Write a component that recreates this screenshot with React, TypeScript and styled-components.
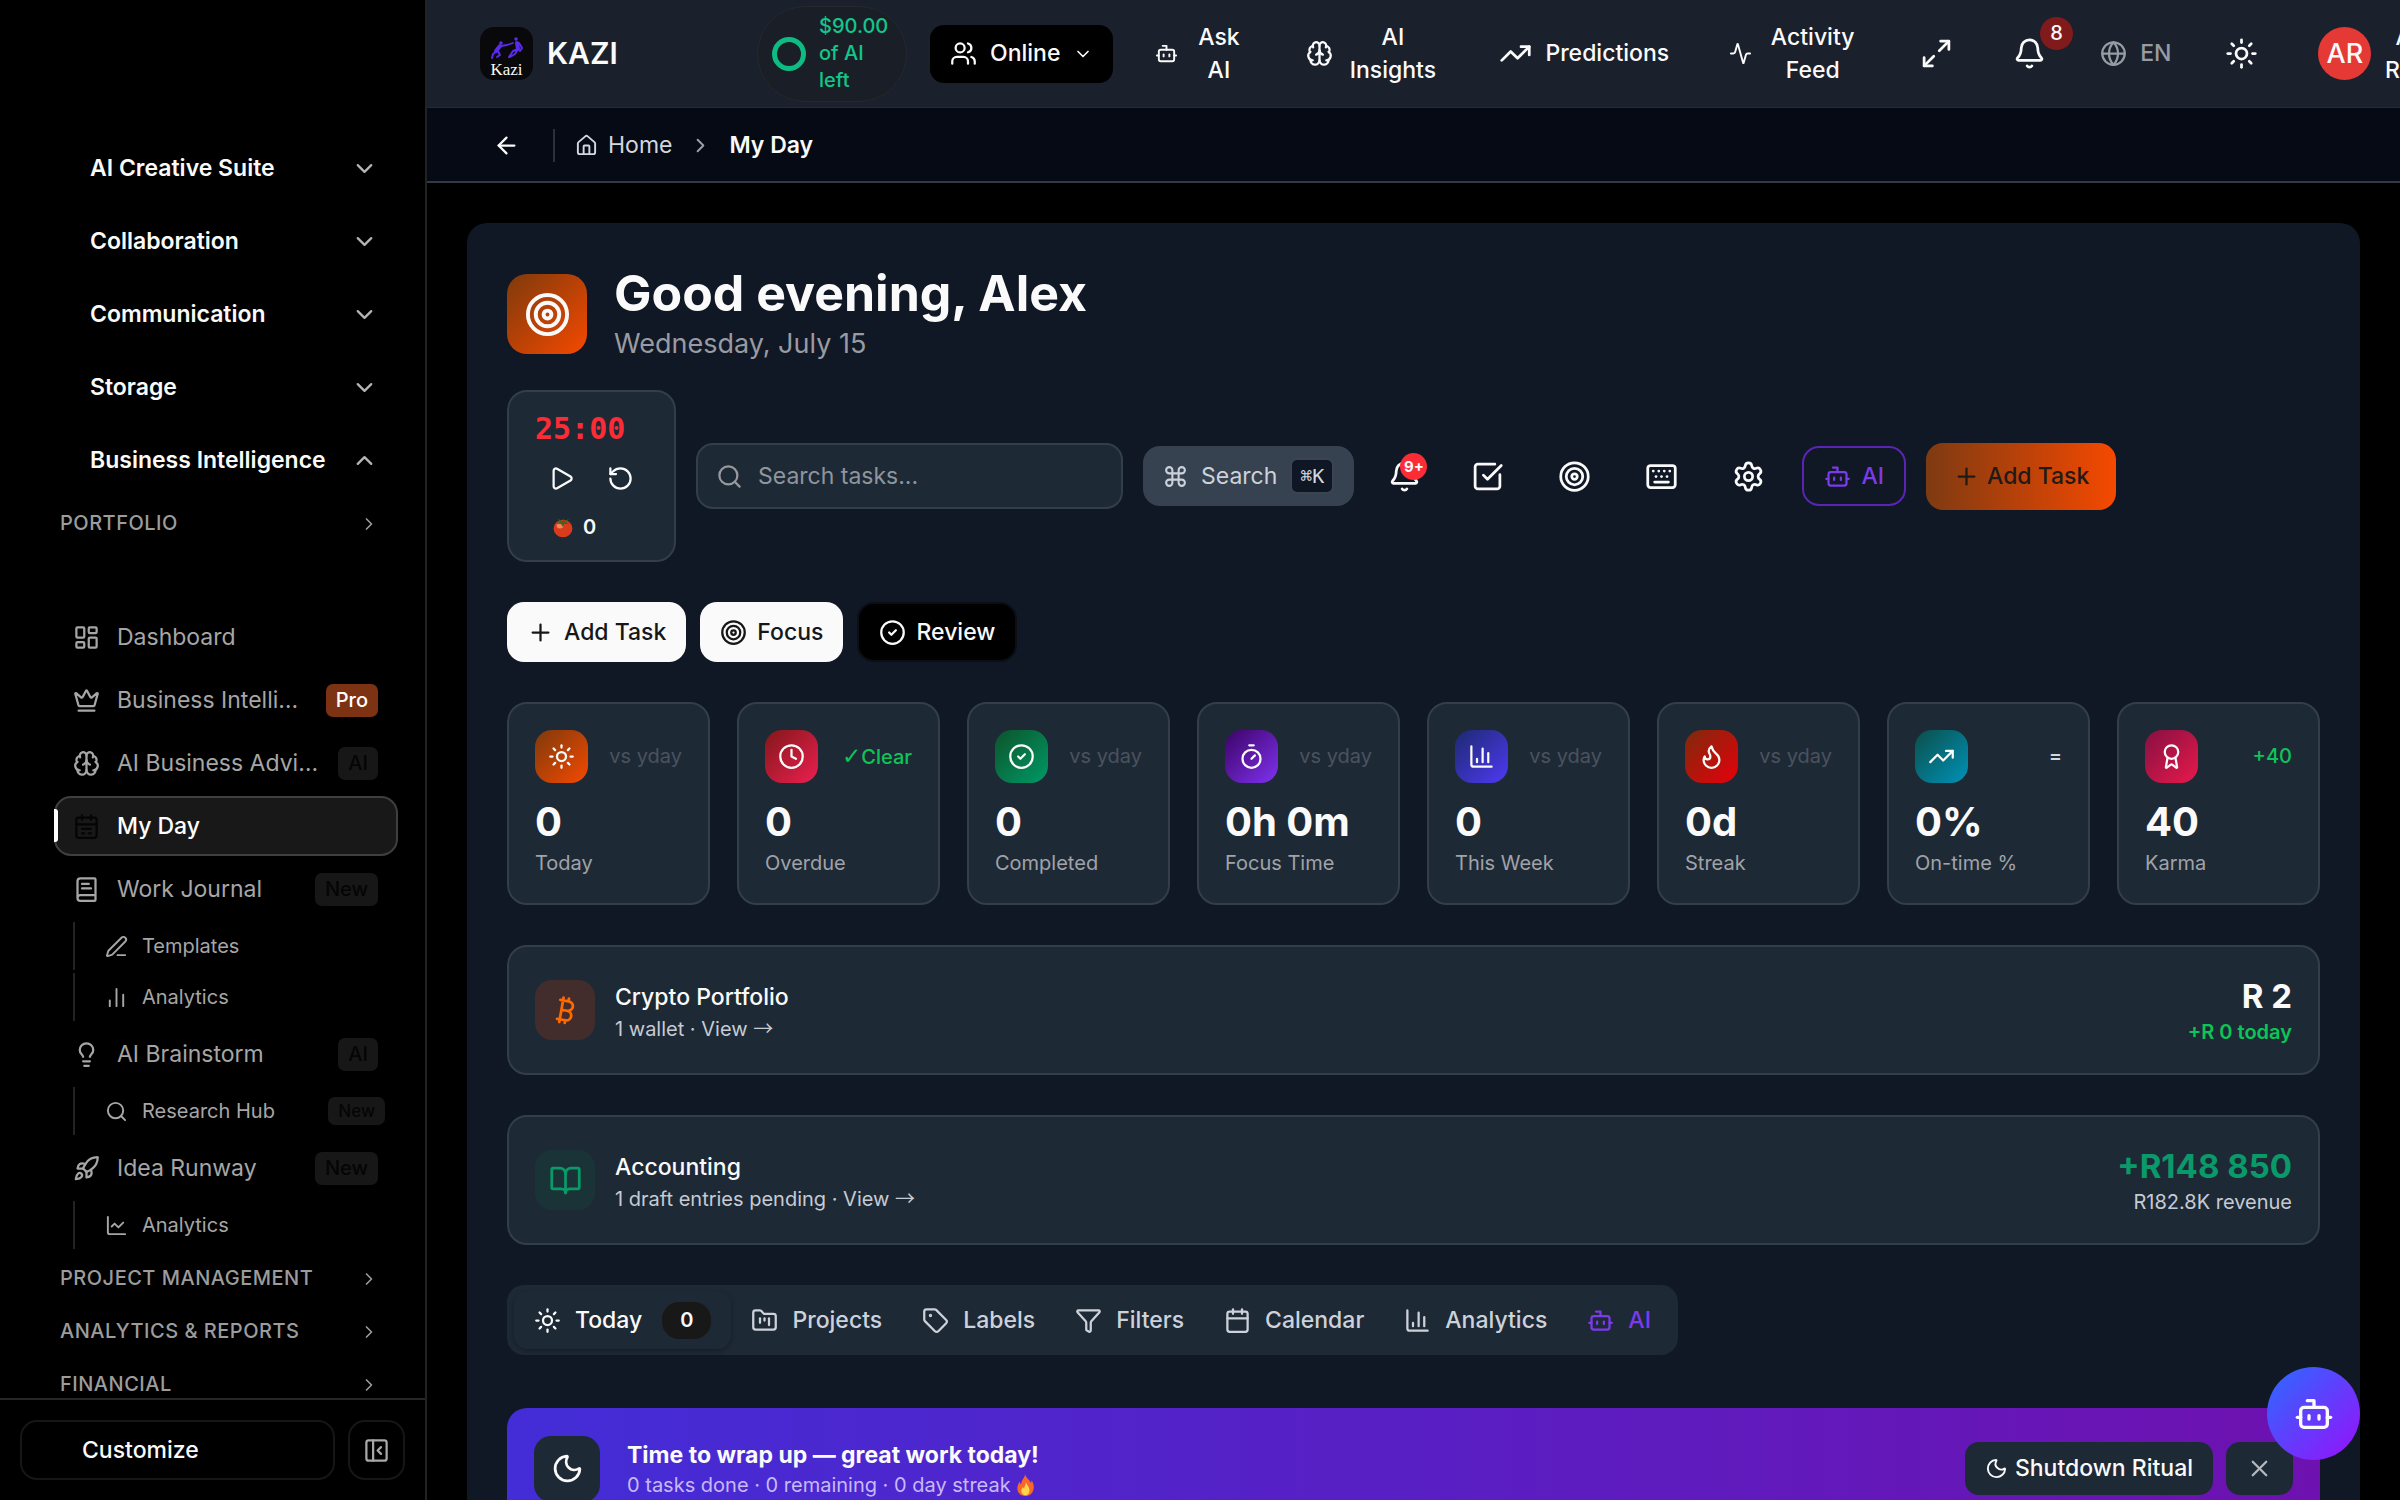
import React from 'react';
import styled, { createGlobalStyle, css } from 'styled-components';
import {
  Activity, ArrowLeft, Award, Bell, Bitcoin, BookOpen, Bot, Brain, Calendar, ChartColumn,
  ChartLine, ChevronDown, ChevronRight, ChevronUp, CircleCheck, Clock,
  Command, Crown, Flame, FolderKanban, Funnel, Globe, House, Keyboard, LayoutDashboard,
  Lightbulb, Maximize2, Moon, PanelLeftClose, PenLine, Play, Plus, Rocket,
  RotateCcw, Search, Settings, SquareCheckBig, Sun, Tag, Target, Timer, TrendingUp, Users, X,
  type LucideIcon,
} from 'lucide-react';

const GlobalStyle = createGlobalStyle`
  *, *::before, *::after { box-sizing: border-box; }
  body {
    margin: 0;
    background: #000;
    color: #fafafa;
    font-family: Inter, "Liberation Sans", sans-serif;
    font-size: 23px;
    line-height: 33px;
    overflow: hidden;
  }
  button, input { font: inherit; color: inherit; }
  button { border: 0; background: none; padding: 0; margin: 0; cursor: pointer; }
  a { color: inherit; text-decoration: none; }
  h1, p, ul { margin: 0; padding: 0; }
  ul { list-style: none; }
  svg { display: block; flex: none; }
`;

const surface = '#1e2936';
const line = '#323e4b';

const Shell = styled.div`
  display: grid;
  grid-template-columns: 427px minmax(0, 1fr);
  height: 100vh;
  overflow: hidden;
`;

/* ---------- sidebar ---------- */

const Sidebar = styled.aside`
  display: flex;
  flex-direction: column;
  min-height: 0;
  border-right: 2px solid #212224;
  background: #000;
`;

const SideScroll = styled.nav`
  flex: 1;
  min-height: 0;
  overflow: hidden;
  padding: 132px 27px 0 54px;
`;

const Category = styled.button`
  display: flex;
  align-items: center;
  justify-content: space-between;
  width: 100%;
  height: 73px;
  padding: 0 20px 0 36px;
  font-weight: 600;
  text-align: left;
  svg { color: #b5b5b5; }
`;

const Section = styled.button`
  display: flex;
  align-items: center;
  justify-content: space-between;
  width: 100%;
  height: 53px;
  padding: 0 19px 0 6px;
  color: #9c9c9c;
  font-size: 20px;
  font-weight: 500;
  letter-spacing: 0.025em;
  text-transform: uppercase;
`;

const NavList = styled.ul`
  display: flex;
  flex-direction: column;
  gap: 3px;
  padding-bottom: 3px;
`;

const GroupGap = styled.div`
  height: 57px;
`;

const NavLink = styled.a<{ $active?: boolean }>`
  position: relative;
  display: flex;
  align-items: center;
  gap: 17px;
  height: 60px;
  padding: 0 18px 0 17px;
  border: 2px solid transparent;
  border-radius: 17px;
  color: #a6a6a6;
  ${(p) => p.$active && css`
    background: #181818;
    border-color: #3f3f3f;
    color: #fff;
    font-weight: 500;
    svg { color: #050505; }
    &::before {
      content: '';
      position: absolute;
      left: -2px;
      top: 11px;
      width: 4px;
      height: 33px;
      border-radius: 0 3px 3px 0;
      background: #fff;
    }
  `}
`;

const NavText = styled.span`
  flex: 1;
  min-width: 0;
  white-space: nowrap;
`;

const Chip = styled.span<{ $pro?: boolean; $small?: boolean }>`
  padding: 0 10px;
  border-radius: 7px;
  background: ${(p) => (p.$pro ? '#7c3213' : '#171717')};
  color: ${(p) => (p.$pro ? '#fff' : '#050505')};
  font-size: ${(p) => (p.$small ? '17px' : '20px')};
  line-height: ${(p) => (p.$small ? '28px' : '33px')};
  font-weight: 500;
`;

const SubLink = styled.a`
  display: flex;
  align-items: center;
  gap: 14px;
  height: 48px;
  margin-left: 19px;
  padding: 0 13px 0 30px;
  border-left: 2px solid #232323;
  color: #a6a6a6;
  font-size: 20px;
`;

const SideFooter = styled.div`
  display: flex;
  gap: 13px;
  padding: 20px;
  border-top: 2px solid #262626;
`;

const footerButton = css`
  height: 60px;
  border: 2px solid #161616;
  border-radius: 17px;
`;

const CustomizeButton = styled.button`
  ${footerButton}
  flex: 1;
  padding-left: 60px;
  text-align: left;
  font-weight: 500;
`;

const CollapseButton = styled.button`
  ${footerButton}
  display: grid;
  place-items: center;
  width: 57px;
  color: #a8a8a8;
`;

/* ---------- top bars ---------- */

const Column = styled.div`
  display: flex;
  flex-direction: column;
  min-width: 0;
  min-height: 0;
`;

const TopBar = styled.header`
  display: flex;
  align-items: center;
  flex: none;
  height: 108px;
  padding-left: 53px;
  overflow: hidden;
  border-bottom: 1px solid #272a2f;
  background: #1a202c;
`;

const Brand = styled.a`
  display: flex;
  align-items: center;
  gap: 14px;
  flex: 0 0 277px;
  font-size: 30px;
  font-weight: 600;
`;

const LogoBox = styled.span`
  display: flex;
  flex-direction: column;
  align-items: center;
  width: 53px;
  height: 53px;
  padding-top: 10px;
  border-radius: 14px;
  background: #09090b;
  font-family: "Liberation Serif", serif;
  font-size: 17px;
  font-weight: 400;
  line-height: 20px;
`;

const CreditPill = styled.button`
  display: flex;
  align-items: center;
  gap: 13px;
  flex: none;
  width: 150px;
  height: 96px;
  padding: 0 14px;
  border: 1px solid #26282b;
  border-radius: 48px;
  background: #1a1f27;
  color: #12c78c;
  font-size: 20px;
  font-weight: 500;
  line-height: 27px;
  text-align: left;
`;

const CreditRing = styled.span`
  flex: none;
  width: 34px;
  height: 34px;
  border: 5px solid #0dbb83;
  border-radius: 50%;
`;

const OnlineButton = styled.button`
  display: flex;
  align-items: center;
  gap: 13px;
  flex: none;
  height: 58px;
  margin: 0 15px 0 23px;
  padding: 0 20px;
  border-radius: 14px;
  background: #000;
  font-weight: 500;
`;

const BarActions = styled.div`
  display: flex;
  align-items: center;
  flex: none;
  gap: 6px;
`;

const BarButton = styled.button<{ $muted?: boolean }>`
  position: relative;
  display: flex;
  align-items: center;
  gap: 13px;
  flex: none;
  padding: 0 ${(p) => (p.$muted ? 21 : 27)}px;
  color: ${(p) => (p.$muted ? '#979ba3' : '#fafafa')};
  font-weight: 500;
`;

const BarLabel = styled.span<{ $width?: number }>`
  width: ${(p) => (p.$width ? `${p.$width}px` : 'auto')};
  text-align: center;
`;

const BellCount = styled.span`
  position: absolute;
  top: -20px;
  right: 0;
  width: 33px;
  height: 33px;
  border-radius: 50%;
  background: #811a1b;
  font-size: 20px;
  line-height: 33px;
  text-align: center;
`;

const Avatar = styled.span`
  display: grid;
  place-items: center;
  width: 53px;
  height: 53px;
  border-radius: 50%;
  background: #e53935;
  font-size: 27px;
  font-weight: 500;
`;

const Crumbs = styled.nav`
  display: flex;
  align-items: center;
  flex: none;
  height: 75px;
  padding: 1px 0 0 53px;
  border-bottom: 2px solid #343a45;
  background: #060a14;
`;

const BackButton = styled.button`
  display: grid;
  place-items: center;
  width: 53px;
  height: 53px;
`;

const CrumbRule = styled.span`
  width: 2px;
  height: 33px;
  margin: 0 20px;
  background: #2b303a;
`;

const CrumbLink = styled.a`
  display: flex;
  align-items: center;
  gap: 10px;
  color: #d3d7de;
`;

const CrumbSep = styled.span`
  margin: 0 17px;
  color: #99a1af;
`;

const CrumbCurrent = styled.span`
  font-weight: 600;
`;

/* ---------- page ---------- */

const Page = styled.main`
  flex: 1;
  min-height: 0;
  overflow: hidden;
  padding: 40px;
`;

const Panel = styled.div`
  display: flex;
  flex-direction: column;
  padding: 40px;
  border-radius: 20px;
  background: #101725;
`;

const Hero = styled.div`
  display: flex;
  align-items: center;
  gap: 27px;
`;

const HeroTile = styled.span`
  display: grid;
  place-items: center;
  width: 80px;
  height: 80px;
  border-radius: 20px;
  background: linear-gradient(135deg, #7e3a0c, #f54900);
`;

const Title = styled.h1`
  font-size: 50px;
  line-height: 60px;
  font-weight: 700;
`;

const Subtitle = styled.p`
  color: #999ba1;
  font-size: 27px;
  line-height: 42px;
`;

const Toolbar = styled.div`
  display: flex;
  align-items: center;
  gap: 20px;
  margin-top: 25px;
`;

const Pomodoro = styled.section`
  width: 169px;
  height: 172px;
  padding: 16px 26px 0;
  border: 2px solid ${line};
  border-radius: 20px;
  background: ${surface};
`;

const PomodoroTime = styled.div`
  color: #fb2c36;
  font-family: "DejaVu Sans Mono", monospace;
  font-size: 30px;
  font-weight: 700;
  line-height: 42px;
`;

const PomodoroControls = styled.div`
  display: flex;
  gap: 32px;
  padding: 15px 0 15px 13px;
`;

const PomodoroCount = styled.div`
  display: flex;
  align-items: center;
  gap: 10px;
  padding-left: 18px;
  font-size: 20px;
  line-height: 40px;
  font-weight: 600;
`;

const SearchField = styled.label`
  display: flex;
  align-items: center;
  gap: 15px;
  width: 427px;
  height: 66px;
  padding: 0 18px;
  border: 2px solid ${line};
  border-radius: 17px;
  background: ${surface};
  color: #98999d;
  input {
    flex: 1;
    min-width: 0;
    border: 0;
    padding: 0;
    outline: 0;
    background: none;
    color: #fafafa;
  }
  input::placeholder { color: #8f959e; opacity: 1; }
`;

const CommandButton = styled.button`
  display: flex;
  align-items: center;
  gap: 13px;
  height: 60px;
  padding: 0 20px;
  border-radius: 17px;
  background: #374251;
  color: #cdd2da;
`;

const Kbd = styled.kbd`
  padding: 0 8px;
  border: 2px solid #3a4553;
  border-radius: 7px;
  background: #0f1724;
  color: #d6dae0;
  font-family: "DejaVu Sans Mono", "DejaVu Sans", monospace;
  font-size: 20px;
  line-height: 32px;
`;

const IconButton = styled.button<{ $narrow?: boolean }>`
  position: relative;
  display: grid;
  place-items: center;
  width: ${(p) => (p.$narrow ? 60 : 67)}px;
  height: 60px;
`;

const AlertCount = styled.span`
  position: absolute;
  top: 7px;
  right: 7px;
  width: 27px;
  height: 27px;
  border-radius: 50%;
  background: #fb2c36;
  font-size: 15px;
  font-weight: 700;
  line-height: 27px;
  text-align: center;
`;

const Button = styled.button<{ $kind: 'white' | 'black' | 'violet' | 'orange' }>`
  display: flex;
  align-items: center;
  gap: 10px;
  height: 60px;
  padding: 0 20px;
  border-radius: 17px;
  font-weight: 500;
  ${(p) => p.$kind === 'white' && css`background: #fafafa; color: #171717;`}
  ${(p) => p.$kind === 'black' && css`background: #000; border: 2px solid #0b0e15;`}
  ${(p) => p.$kind === 'violet' && css`border: 2px solid #5a25b4; color: #7c3aed;`}
  ${(p) => p.$kind === 'orange' && css`
    height: 67px;
    padding: 0 27px;
    gap: 7px;
    background: linear-gradient(90deg, #7e3a12, #f54900);
    color: #221a17;
  `}
`;

const QuickActions = styled.div`
  display: flex;
  gap: 14px;
  margin-top: 40px;
`;

const Stats = styled.section`
  display: grid;
  grid-template-columns: repeat(8, minmax(0, 1fr));
  gap: 27px;
  margin-top: 40px;
`;

const cardBox = css`
  border: 2px solid ${line};
  border-radius: 20px;
  background: ${surface};
`;

const StatCard = styled.article`
  ${cardBox}
  height: 203px;
  padding: 26px;
`;

const StatHead = styled.div`
  display: flex;
  align-items: center;
  justify-content: space-between;
`;

const StatTile = styled.span<{ $from: string; $to: string }>`
  display: grid;
  place-items: center;
  width: 53px;
  height: 53px;
  border-radius: 17px;
  background: linear-gradient(135deg, ${(p) => p.$from}, ${(p) => p.$to});
`;

const StatNote = styled.span<{ $color: string }>`
  color: ${(p) => p.$color};
  font-size: 20px;
  font-weight: ${(p) => (p.$color === '#4a525e' ? 400 : 500)};
  white-space: nowrap;
`;

const CheckGlyph = styled.span`
  font-family: "DejaVu Sans", sans-serif;
  font-size: 23px;
  font-weight: 700;
`;

const ArrowGlyph = styled.span`
  font-family: "Noto Sans CJK JP", sans-serif;
`;

const StatValue = styled.div`
  margin-top: 15px;
  font-size: 40px;
  font-weight: 700;
  line-height: 47px;
`;

const StatLabel = styled.div`
  color: #a0a3a8;
  font-size: 20px;
  line-height: 36px;
`;

const SummaryCard = styled.article`
  ${cardBox}
  display: flex;
  align-items: center;
  gap: 20px;
  height: 130px;
  margin-top: 40px;
  padding: 0 26px;
`;

const SummaryTile = styled.span<{ $bg: string; $color: string }>`
  display: grid;
  place-items: center;
  width: 60px;
  height: 60px;
  border-radius: 17px;
  background: ${(p) => p.$bg};
  color: ${(p) => p.$color};
`;

const SummaryText = styled.div`
  flex: 1;
  padding-top: 2px;
  font-weight: 500;
`;

const SummaryLink = styled.a`
  display: block;
  height: 27px;
  color: #c6cbd3;
  font-size: 20px;
  font-weight: 400;
  line-height: 27px;
`;

const SummaryFigures = styled.div`
  padding-top: 5px;
  text-align: right;
`;

const SummaryAmount = styled.div<{ $color?: string }>`
  color: ${(p) => p.$color ?? '#fafafa'};
  font-size: 33px;
  font-weight: 700;
  line-height: 40px;
`;

const SummaryNote = styled.div<{ $green?: boolean }>`
  color: ${(p) => (p.$green ? '#0dc557' : '#c6cbd3')};
  font-size: 20px;
  font-weight: ${(p) => (p.$green ? 600 : 400)};
`;

const Tabs = styled.div`
  display: flex;
  align-self: flex-start;
  margin-top: 40px;
  padding: 6px 7px;
  border-radius: 17px;
  background: ${surface};
`;

const Tab = styled.button<{ $active?: boolean; $violet?: boolean }>`
  display: flex;
  align-items: center;
  gap: 14px;
  height: 58px;
  padding: 0 20px;
  border-radius: 14px;
  color: ${(p) => (p.$violet ? '#7c3aed' : p.$active ? '#fafafa' : '#cdd2da')};
  box-shadow: ${(p) => (p.$active ? '0 2px 5px rgba(0, 0, 0, 0.3)' : 'none')};
  font-weight: 500;
`;

const TabCount = styled.span`
  margin-left: 6px;
  padding: 0 18px;
  border-radius: 17px;
  background: #181818;
  font-size: 20px;
  font-weight: 600;
  line-height: 37px;
`;

const Banner = styled.section`
  display: flex;
  align-items: center;
  gap: 13px;
  height: 121px;
  margin-top: 53px;
  padding: 0 27px;
  border-radius: 20px;
  background: linear-gradient(90deg, #432dd7, #6e11b0);
`;

const BannerTile = styled.span`
  display: grid;
  place-items: center;
  width: 66px;
  height: 66px;
  margin-right: 14px;
  border-radius: 17px;
  background: ${surface};
`;

const BannerText = styled.div`
  flex: 1;
  font-weight: 700;
`;

const BannerSub = styled.div`
  display: flex;
  align-items: center;
  gap: 6px;
  color: #c8b9f6;
  font-size: 20px;
  font-weight: 400;
  line-height: 27px;
`;

const BannerButton = styled.button`
  display: flex;
  align-items: center;
  justify-content: center;
  gap: 7px;
  min-width: 66px;
  height: 53px;
  padding: 0 20px;
  border-radius: 14px;
  background: ${surface};
  font-weight: 500;
`;

const AssistantButton = styled.button`
  position: fixed;
  right: 40px;
  bottom: 40px;
  display: grid;
  place-items: center;
  width: 93px;
  height: 93px;
  border-radius: 50%;
  background: linear-gradient(135deg, #2b6bff, #9810fa);
`;

/* ---------- drawings ---------- */

const DancersMark = () => (
  <svg width="34" height="23" viewBox="0 0 34 23" fill="none" stroke="#5a2bea" strokeLinecap="round" strokeLinejoin="round">
    <circle cx="11" cy="6" r="1.8" fill="#5a2bea" stroke="none" />
    <circle cx="26" cy="2" r="1.8" fill="#5a2bea" stroke="none" />
    <path d="M10 9 6 14" strokeWidth="4" />
    <path d="M7 14 3 17 2 21M8 14l2 4-3 2" strokeWidth="2" />
    <path d="m11 9 6-1 6-2" strokeWidth="1.8" />
    <path d="m27 6 1 6" strokeWidth="4" />
    <path d="m28 12-3 5-5 3M28 12l-5 2-4 6M29 6l3 5-2 3" strokeWidth="2" />
  </svg>
);

const TomatoMark = () => (
  <svg width="20" height="22" viewBox="0 0 20 22" role="img" aria-label="Pomodoros">
    <ellipse cx="10" cy="12.5" rx="9.4" ry="8.8" fill="#d83c1c" />
    <ellipse cx="7" cy="10" rx="3.4" ry="2.4" fill="#f3855f" />
    <path d="m10 5-5-2 2 3-4 1 5 1 2 3 1-3 6 0-4-2 3-3-5 2-.5-3z" fill="#4d5f1d" />
  </svg>
);

const FireMark = () => (
  <svg width="17" height="22" viewBox="0 0 17 22" role="img" aria-label="Streak">
    <path d="M8 0c1 4 5 6 6 9 .6-1 .6-2 .4-3C17 10 17 13 16.500 15.500 15.500 20 12 22 8.500 22S1 20 .4 15.500C0 12 1.500 9.500 3 7.500c0 1.500.5 2.500 1.200 3C4 6 8 4 8 0z" fill="#f8672a" />
    <path d="M9 8c.5 3 3.500 4.500 3.500 8.500 0 3-1.800 4.800-4 4.800s-4.200-1.800-4.200-4.300c0-1.800.9-3 1.700-4 .2 1 .6 1.500 1.100 1.700C7 12.500 9 11 9 8z" fill="#ffd34a" />
  </svg>
);

type GlyphProps = { size?: number };

const CalendarNotes = ({ size = 27 }: GlyphProps) => (
  <svg width={size} height={size} viewBox="0 0 24 24" fill="none" stroke="currentColor" strokeWidth="2" strokeLinecap="round" strokeLinejoin="round">
    <path d="M8 2v4M16 2v4M3 10h18M8 14h8M8 18h2M14 18h2" />
    <rect width="18" height="18" x="3" y="4" rx="2" />
  </svg>
);

const NotebookPage = ({ size = 27 }: GlyphProps) => (
  <svg width={size} height={size} viewBox="0 0 24 24" fill="none" stroke="currentColor" strokeWidth="2" strokeLinecap="round" strokeLinejoin="round">
    <path d="M4 19.500v-15A2.500 2.500 0 0 1 6.500 2H19a1 1 0 0 1 1 1v18a1 1 0 0 1-1 1H6.500a1 1 0 0 1 0-5H20" />
    <path d="M8 11h8M8 7h6" />
  </svg>
);

const ThinBars = ({ size = 23 }: GlyphProps) => (
  <svg width={size} height={size} viewBox="0 0 24 24" fill="none" stroke="currentColor" strokeWidth="2" strokeLinecap="round">
    <path d="M12 21V3M19 21V9M5 21v-6" />
  </svg>
);

/* ---------- data ---------- */

const categories = ['AI Creative Suite', 'Collaboration', 'Communication', 'Storage'];

type NavEntry = {
  icon: React.ComponentType<{ size?: number }>;
  label: string;
  chip?: string;
  sub?: boolean;
  active?: boolean;
};

const navEntries: NavEntry[] = [
  { icon: LayoutDashboard, label: 'Dashboard' },
  { icon: Crown, label: 'Business Intelli…', chip: 'Pro' },
  { icon: Brain, label: 'AI Business Advi…', chip: 'AI' },
  { icon: CalendarNotes, label: 'My Day', active: true },
  { icon: NotebookPage, label: 'Work Journal', chip: 'New' },
  { icon: PenLine, label: 'Templates', sub: true },
  { icon: ThinBars, label: 'Analytics', sub: true },
  { icon: Lightbulb, label: 'AI Brainstorm', chip: 'AI' },
  { icon: Search, label: 'Research Hub', chip: 'New', sub: true },
  { icon: Rocket, label: 'Idea Runway', chip: 'New' },
  { icon: ChartLine, label: 'Analytics', sub: true },
];

type Stat = {
  icon: LucideIcon;
  from: string;
  to: string;
  note: React.ReactNode;
  tone: 'dim' | 'good' | 'even';
  value: string;
  label: string;
};

const stats: Stat[] = [
  { icon: Sun, from: '#7e3a0c', to: '#f54900', note: 'vs yday', tone: 'dim', value: '0', label: 'Today' },
  { icon: Clock, from: '#82181a', to: '#ec1f50', note: <><CheckGlyph>✓</CheckGlyph>Clear</>, tone: 'good', value: '0', label: 'Overdue' },
  { icon: CircleCheck, from: '#0d542b', to: '#009966', note: 'vs yday', tone: 'dim', value: '0', label: 'Completed' },
  { icon: Timer, from: '#3c0366', to: '#7f32f0', note: 'vs yday', tone: 'dim', value: '0h 0m', label: 'Focus Time' },
  { icon: ChartColumn, from: '#1c2a6e', to: '#4f39f6', note: 'vs yday', tone: 'dim', value: '0', label: 'This Week' },
  { icon: Flame, from: '#7e2a0c', to: '#e7000b', note: 'vs yday', tone: 'dim', value: '0d', label: 'Streak' },
  { icon: TrendingUp, from: '#0b4f4a', to: '#0092b8', note: '=', tone: 'even', value: '0%', label: 'On-time %' },
  { icon: Award, from: '#861043', to: '#e8194a', note: '+40', tone: 'good', value: '40', label: 'Karma' },
];

const noteColors = { dim: '#4a525e', good: '#0dc557', even: '#d3d7de' };

const tabs: { icon: LucideIcon; label: string }[] = [
  { icon: FolderKanban, label: 'Projects' },
  { icon: Tag, label: 'Labels' },
  { icon: Funnel, label: 'Filters' },
  { icon: Calendar, label: 'Calendar' },
  { icon: ChartColumn, label: 'Analytics' },
];

const toolButtons: { icon: LucideIcon; name: string }[] = [
  { icon: SquareCheckBig, name: 'Select tasks' },
  { icon: Target, name: 'Focus mode' },
  { icon: Keyboard, name: 'Shortcuts' },
  { icon: Settings, name: 'Settings' },
];

/* ---------- view ---------- */

const SideNav = () => (
  <Sidebar>
    <SideScroll aria-label="Main">
      {categories.map((name) => (
        <Category key={name} type="button">{name}<ChevronDown size={27} /></Category>
      ))}
      <Category type="button">Business Intelligence<ChevronUp size={27} /></Category>
      <Section type="button">Portfolio<ChevronRight size={20} /></Section>
      <GroupGap />
      <NavList>
        {navEntries.map(({ icon: Icon, label, chip, sub, active }, i) => (
          <li key={i}>
            {sub ? (
              <SubLink href="#">
                <Icon size={23} />
                <NavText>{label}</NavText>
                {chip && <Chip $small>{chip}</Chip>}
              </SubLink>
            ) : (
              <NavLink href="#" $active={active}>
                <Icon size={27} />
                <NavText>{label}</NavText>
                {chip && <Chip $pro={chip === 'Pro'}>{chip}</Chip>}
              </NavLink>
            )}
          </li>
        ))}
      </NavList>
      {['Project Management', 'Analytics & Reports', 'Financial'].map((name) => (
        <Section key={name} type="button">{name}<ChevronRight size={20} /></Section>
      ))}
    </SideScroll>
    <SideFooter>
      <CustomizeButton type="button">Customize</CustomizeButton>
      <CollapseButton type="button" aria-label="Collapse sidebar"><PanelLeftClose size={27} /></CollapseButton>
    </SideFooter>
  </Sidebar>
);

const Header = () => (
  <TopBar>
    <Brand href="#">
      <LogoBox><DancersMark />Kazi</LogoBox>
      KAZI
    </Brand>
    <CreditPill type="button"><CreditRing />$90.00 of AI left</CreditPill>
    <OnlineButton type="button"><Users size={27} />Online<ChevronDown size={20} /></OnlineButton>
    <BarActions>
      <BarButton type="button"><Bot size={23} /><BarLabel $width={55}>Ask AI</BarLabel></BarButton>
      <BarButton type="button"><Brain size={27} /><BarLabel $width={93}>AI Insights</BarLabel></BarButton>
      <BarButton type="button"><TrendingUp size={33} /><BarLabel>Predictions</BarLabel></BarButton>
      <BarButton type="button"><Activity size={23} /><BarLabel $width={95}>Activity Feed</BarLabel></BarButton>
      <BarButton type="button" aria-label="Full screen"><Maximize2 size={33} /></BarButton>
      <BarButton type="button" aria-label="Notifications"><Bell size={33} /><BellCount>8</BellCount></BarButton>
      <BarButton type="button" $muted><Globe size={27} />EN</BarButton>
      <BarButton type="button" aria-label="Theme"><Sun size={33} /></BarButton>
      <BarButton type="button"><Avatar>AR</Avatar><BarLabel $width={70}>Alex Rivera</BarLabel></BarButton>
    </BarActions>
  </TopBar>
);

export default function App() {
  return (
    <>
      <GlobalStyle />
      <Shell>
        <SideNav />
        <Column>
          <Header />
          <Crumbs aria-label="Breadcrumb">
            <BackButton type="button" aria-label="Back"><ArrowLeft size={27} /></BackButton>
            <CrumbRule />
            <CrumbLink href="#"><House size={23} />Home</CrumbLink>
            <CrumbSep><ChevronRight size={23} /></CrumbSep>
            <CrumbCurrent>My Day</CrumbCurrent>
          </Crumbs>
          <Page>
            <Panel>
              <Hero>
                <HeroTile><Target size={47} /></HeroTile>
                <div>
                  <Title>Good evening, Alex</Title>
                  <Subtitle>Wednesday, July 15</Subtitle>
                </div>
              </Hero>

              <Toolbar>
                <Pomodoro>
                  <PomodoroTime>25:00</PomodoroTime>
                  <PomodoroControls>
                    <button type="button" aria-label="Start timer"><Play size={27} /></button>
                    <button type="button" aria-label="Reset timer"><RotateCcw size={27} /></button>
                  </PomodoroControls>
                  <PomodoroCount><TomatoMark />0</PomodoroCount>
                </Pomodoro>
                <SearchField>
                  <Search size={27} />
                  <input type="text" placeholder="Search tasks..." aria-label="Search tasks" />
                </SearchField>
                <CommandButton type="button"><Command size={25} />Search<Kbd>⌘K</Kbd></CommandButton>
                <IconButton type="button" $narrow aria-label="Alerts"><Bell size={33} /><AlertCount>9+</AlertCount></IconButton>
                {toolButtons.map(({ icon: Icon, name }) => (
                  <IconButton key={name} type="button" aria-label={name}><Icon size={33} /></IconButton>
                ))}
                <Button type="button" $kind="violet"><Bot size={27} />AI</Button>
                <Button type="button" $kind="orange"><Plus size={27} />Add Task</Button>
              </Toolbar>

              <QuickActions>
                <Button type="button" $kind="white"><Plus size={27} />Add Task</Button>
                <Button type="button" $kind="white"><Target size={27} />Focus</Button>
                <Button type="button" $kind="black"><CircleCheck size={27} />Review</Button>
              </QuickActions>

              <Stats>
                {stats.map(({ icon: Icon, from, to, note, tone, value, label }) => (
                  <StatCard key={label}>
                    <StatHead>
                      <StatTile $from={from} $to={to}><Icon size={27} /></StatTile>
                      <StatNote $color={noteColors[tone]}>{note}</StatNote>
                    </StatHead>
                    <StatValue>{value}</StatValue>
                    <StatLabel>{label}</StatLabel>
                  </StatCard>
                ))}
              </Stats>

              <SummaryCard>
                <SummaryTile $bg="#432d2c" $color="#ff6900"><Bitcoin size={33} /></SummaryTile>
                <SummaryText>
                  Crypto Portfolio
                  <SummaryLink href="#">1 wallet · View <ArrowGlyph>→</ArrowGlyph></SummaryLink>
                </SummaryText>
                <SummaryFigures>
                  <SummaryAmount>R 2</SummaryAmount>
                  <SummaryNote $green>+R 0 today</SummaryNote>
                </SummaryFigures>
              </SummaryCard>

              <SummaryCard>
                <SummaryTile $bg="#1a3337" $color="#0a9a6a"><BookOpen size={33} /></SummaryTile>
                <SummaryText>
                  Accounting
                  <SummaryLink href="#">1 draft entries pending · View <ArrowGlyph>→</ArrowGlyph></SummaryLink>
                </SummaryText>
                <SummaryFigures>
                  <SummaryAmount $color="#0a9a6a">+R148 850</SummaryAmount>
                  <SummaryNote>R182.8K revenue</SummaryNote>
                </SummaryFigures>
              </SummaryCard>

              <Tabs role="tablist">
                <Tab type="button" role="tab" aria-selected $active><Sun size={27} />Today<TabCount>0</TabCount></Tab>
                {tabs.map(({ icon: Icon, label }) => (
                  <Tab key={label} type="button" role="tab"><Icon size={27} />{label}</Tab>
                ))}
                <Tab type="button" role="tab" $violet><Bot size={27} />AI</Tab>
              </Tabs>

              <Banner>
                <BannerTile><Moon size={33} /></BannerTile>
                <BannerText>
                  Time to wrap up — great work today!
                  <BannerSub>0 tasks done · 0 remaining · 0 day streak <FireMark /></BannerSub>
                </BannerText>
                <BannerButton type="button"><Moon size={23} />Shutdown Ritual</BannerButton>
                <BannerButton type="button" aria-label="Dismiss"><X size={27} color="#b4b9c0" /></BannerButton>
              </Banner>
            </Panel>
          </Page>
        </Column>
      </Shell>
      <AssistantButton type="button" aria-label="Open assistant"><Bot size={40} /></AssistantButton>
    </>
  );
}
